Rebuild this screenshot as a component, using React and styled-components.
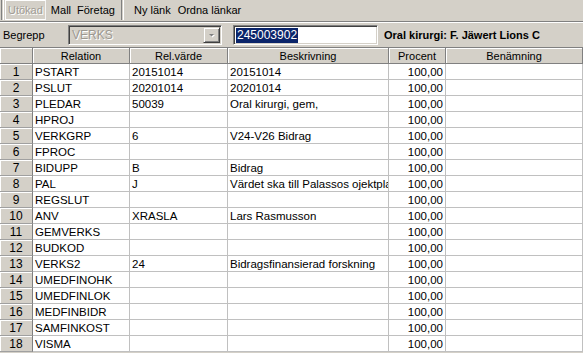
import React from "react";
import styled, { createGlobalStyle } from "styled-components";

const Global = createGlobalStyle`
  html, body { margin: 0; padding: 0; }
  body {
    background: #d4d0c8;
    font-family: "Liberation Sans", Arial, sans-serif;
    font-size: 11px;
    color: #000;
    overflow: hidden;
  }
`;

const Window = styled.div`
  width: 583px;
  height: 353px;
  display: flex;
  flex-direction: column;
  background: #d4d0c8;
  overflow: hidden;
`;

const Toolbar = styled.div`
  display: flex;
  align-items: stretch;
  height: 21px;
  border-bottom: 1px solid #808080;
  box-shadow: 0 1px 0 #ffffff;
  padding-left: 1px;
`;

const Grip = styled.div`
  width: 1px;
  border-left: 1px solid #808080;
  border-right: 1px solid #ffffff;
  margin: 0 1px 1px 0;
`;

const ToolButton = styled.div`
  display: flex;
  align-items: center;
  padding: 0 2px;
  margin-right: ${(p) => p.$gap || 0}px;
  height: 20px;
  box-sizing: border-box;
  white-space: nowrap;
  color: ${(p) => (p.$disabled ? "#a09c94" : "#000")};
  text-shadow: ${(p) => (p.$disabled ? "1px 1px 0 #ffffff" : "none")};
  border: 1px solid ${(p) => (p.$pressed ? "#ffffff" : "transparent")};
  border-right-color: ${(p) => (p.$pressed ? "#f4f4f4" : "transparent")};
`;

const Separator = styled.div`
  width: 1px;
  border-left: 1px solid #808080;
  border-right: 1px solid #ffffff;
  margin: 0 7px 1px 3px;
`;

const FilterBar = styled.div`
  display: flex;
  align-items: center;
  height: 24px;
  margin-top: 1px;
  padding-left: 3px;
  border-bottom: 1px solid #808080;
`;

const Label = styled.span`
  width: 65px;
`;

const Combo = styled.div`
  display: flex;
  align-items: stretch;
  width: 154px;
  height: 20px;
  box-sizing: border-box;
  border: 1px solid;
  border-color: #808080 #ffffff #ffffff #808080;
  box-shadow: inset 1px 1px 0 #404040, inset -1px -1px 0 #d4d0c8;
  background: #d4d0c8;
  margin-right: 11px;
`;

const ComboText = styled.span`
  flex: 1;
  display: flex;
  align-items: center;
  padding-left: 3px;
  font-size: 12px;
  color: #9c9890;
  text-shadow: 1px 1px 0 #ffffff;
`;

const ComboButton = styled.div`
  width: 17px;
  margin: 1px 1px 1px 0;
  box-sizing: border-box;
  background: #d4d0c8;
  border: 1px solid;
  border-color: #d4d0c8 #404040 #404040 #d4d0c8;
  box-shadow: inset 1px 1px 0 #ffffff, inset -1px -1px 0 #808080;
  display: flex;
  align-items: center;
  justify-content: center;
`;

const TextField = styled.div`
  width: 145px;
  height: 20px;
  box-sizing: border-box;
  border: 1px solid;
  border-color: #808080 #ffffff #ffffff #808080;
  box-shadow: inset 1px 1px 0 #404040, inset -1px -1px 0 #d4d0c8;
  background: #fff;
  display: flex;
  align-items: center;
  padding-left: 2px;
  margin-right: 6px;
`;

const Selected = styled.span`
  background: #0a246a;
  color: #fff;
  font-size: 12px;
  line-height: 15px;
  padding: 0 1px;
`;

const Title = styled.span`
  font-weight: bold;
  font-size: 11px;
  white-space: nowrap;
`;

const Grid = styled.div`
  display: grid;
  grid-template-columns: 33px 97px 98px 161px 57px 1fr;
  grid-auto-rows: 16px;
  background: #fff;
`;

const HeadCell = styled.div`
  background: #d4d0c8;
  box-sizing: border-box;
  border-right: 1px solid #808080;
  border-bottom: 1px solid #808080;
  box-shadow: inset 1px 1px 0 #ffffff;
  display: flex;
  align-items: center;
  justify-content: center;
  white-space: nowrap;
  overflow: hidden;
`;

const RowHead = styled(HeadCell)`
  border-bottom: 1px solid #a0a0a0;
  font-size: 12px;
`;

const Cell = styled.div`
  box-sizing: border-box;
  border-right: 1px solid #c0c0c0;
  border-bottom: 1px solid #c0c0c0;
  display: flex;
  align-items: center;
  justify-content: ${(p) => (p.$right ? "flex-end" : "flex-start")};
  padding: 0 ${(p) => (p.$right ? "2px" : "0")} 0 ${(p) => (p.$right ? "0" : "2px")};
  white-space: nowrap;
  overflow: hidden;
  min-width: 0;
  font-size: 11.5px;
`;

const rows = [
  ["PSTART", "20151014", "20151014"],
  ["PSLUT", "20201014", "20201014"],
  ["PLEDAR", "50039", "Oral kirurgi, gem,"],
  ["HPROJ", "", ""],
  ["VERKGRP", "6", "V24-V26 Bidrag"],
  ["FPROC", "", ""],
  ["BIDUPP", "B", "Bidrag"],
  ["PAL", "J", "Värdet ska till Palassos ojektplane"],
  ["REGSLUT", "", ""],
  ["ANV", "XRASLA", "Lars Rasmusson"],
  ["GEMVERKS", "", ""],
  ["BUDKOD", "", ""],
  ["VERKS2", "24", "Bidragsfinansierad forskning"],
  ["UMEDFINOHK", "", ""],
  ["UMEDFINLOK", "", ""],
  ["MEDFINBIDR", "", ""],
  ["SAMFINKOST", "", ""],
  ["VISMA", "", ""],
];

export default function App() {
  return (
    <>
      <Global />
      <Window>
        <Toolbar>
          <Grip />
          <ToolButton $pressed $disabled $gap={2}>Utökad</ToolButton>
          <ToolButton>Mall</ToolButton>
          <ToolButton>Företag</ToolButton>
          <Separator />
          <ToolButton $gap={1}>Ny länk</ToolButton>
          <ToolButton>Ordna länkar</ToolButton>
        </Toolbar>
        <FilterBar>
          <Label>Begrepp</Label>
          <Combo>
            <ComboText>VERKS</ComboText>
            <ComboButton>
              <svg width="8" height="5" viewBox="0 0 8 5">
                <path d="M2 2h5L4.5 4.5z" fill="#ffffff" />
                <path d="M1 1h5L3.5 3.5z" fill="#808080" />
              </svg>
            </ComboButton>
          </Combo>
          <TextField>
            <Selected>245003902</Selected>
          </TextField>
          <Title>Oral kirurgi: F. Jäwert Lions C</Title>
        </FilterBar>
        <Grid>
          <HeadCell />
          <HeadCell>Relation</HeadCell>
          <HeadCell>Rel.värde</HeadCell>
          <HeadCell>Beskrivning</HeadCell>
          <HeadCell>Procent</HeadCell>
          <HeadCell>Benämning</HeadCell>
          {rows.map((r, i) => (
            <React.Fragment key={i}>
              <RowHead>{i + 1}</RowHead>
              <Cell>{r[0]}</Cell>
              <Cell>{r[1]}</Cell>
              <Cell>{r[2]}</Cell>
              <Cell $right>100,00</Cell>
              <Cell />
            </React.Fragment>
          ))}
        </Grid>
      </Window>
    </>
  );
}
